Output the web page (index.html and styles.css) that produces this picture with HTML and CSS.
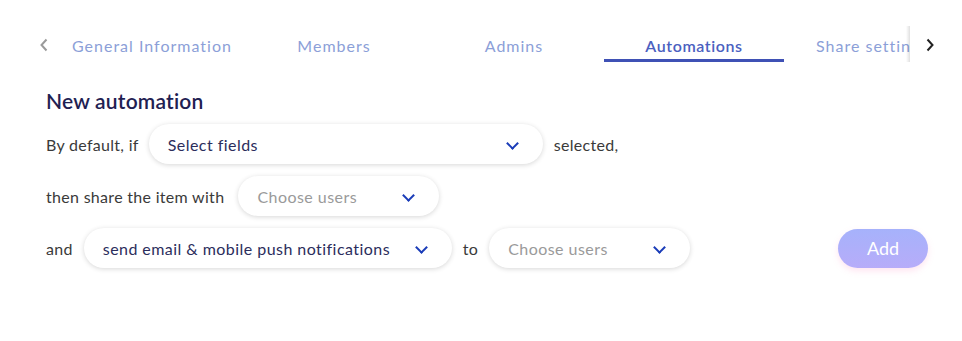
FILE: index.html
```html
<!DOCTYPE html>
<html lang="en">
<head>
    <meta charset="UTF-8">
    <title>Automations</title>
    <link rel="stylesheet" href="styles.css">
</head>
<body>

    <div class="tabbar">
        <button class="tab-arrow left">
            <svg width="10" height="14" viewBox="0 0 10 14"><path d="M7.5 1.5 L2.5 7 L7.5 12.5" fill="none" stroke="#9a9a9a" stroke-width="2"/></svg>
        </button>
        <div class="tabs">
            <div class="tab">General Information</div>
            <div class="tab">Members</div>
            <div class="tab">Admins</div>
            <div class="tab active">Automations</div>
            <div class="tab">Share settings</div>
            <div class="fade"></div>
        </div>
        <button class="tab-arrow right">
            <svg width="10" height="14" viewBox="0 0 10 14"><path d="M2.5 1.5 L7.5 7 L2.5 12.5" fill="none" stroke="#222" stroke-width="2"/></svg>
        </button>
    </div>

    <div class="content">
        <h2>New automation</h2>

        <div class="rule-row">
            <span>By default, if</span>
            <div class="select w-fields"><span class="value">Select fields</span><span class="chev"></span></div>
            <span>selected,</span>
        </div>

        <div class="rule-row">
            <span>then share the item with</span>
            <div class="select w-users share"><span class="placeholder">Choose users</span><span class="chev"></span></div>
        </div>

        <div class="rule-row">
            <span>and</span>
            <div class="select w-notify"><span class="value">send email &amp; mobile push notifications</span><span class="chev"></span></div>
            <span>to</span>
            <div class="select w-users"><span class="placeholder">Choose users</span><span class="chev"></span></div>
            <button class="add-btn">Add</button>
        </div>
    </div>

</body>
</html>
```

FILE: styles.css
```css
html, body {
    margin: 0;
    background: #fff;
    font-family: Lato, "Open Sans", sans-serif;
}

.tabbar {
    display: flex;
    align-items: center;
    padding: 26px 0 0 34px;
    height: 36px;
}

.tab-arrow {
    background: none;
    border: none;
    padding: 0;
    width: 20px;
    height: 20px;
    display: flex;
    align-items: center;
    justify-content: center;
    cursor: pointer;
    margin-top: 2px;
}

.tab-arrow.left {
    margin-right: 10px;
}

.tab-arrow.right {
    margin-left: 10px;
}

.tabs {
    display: flex;
    width: 846px;
    overflow: hidden;
    position: relative;
    height: 36px;
}

.tab {
    flex: 0 0 180px;
    text-align: center;
    font-size: 16px;
    letter-spacing: 1px;
    color: #8c9fd8;
    padding-top: 10px;
    box-sizing: border-box;
    border-bottom: 3px solid transparent;
    white-space: nowrap;
}

.tab:first-child {
    text-align: left;
    padding-left: 8px;
}

.tab:nth-child(5) {
    text-align: left;
    padding-left: 32px;
}

.tab.active {
    color: #4b5fc0;
    font-weight: 600;
    letter-spacing: 0.6px;
    border-bottom-color: #3f51b5;
}

.fade {
    position: absolute;
    right: 0;
    top: 0;
    width: 4px;
    height: 36px;
    background: linear-gradient(to right, rgba(0,0,0,0), rgba(0,0,0,0.12));
}

.content {
    padding: 0 34px 0 46px;
}

.content h2 {
    margin: 26px 0 11px;
    font-size: 21px;
    font-weight: 600;
    letter-spacing: 0.2px;
    color: #1f2152;
}

.rule-row {
    display: flex;
    align-items: center;
    gap: 11px;
    height: 40px;
    margin-bottom: 12px;
    font-size: 16px;
    letter-spacing: 0.3px;
    color: #3a3a3a;
}

.select {
    display: flex;
    align-items: center;
    justify-content: space-between;
    box-sizing: border-box;
    height: 40px;
    padding: 0 26px 0 19px;
    border-radius: 20px;
    background: #fff;
    box-shadow: 0 1px 5px rgba(0, 0, 0, 0.16);
    font-size: 16px;
    letter-spacing: 0.45px;
}

.w-fields { width: 394px; margin-left: -1px; }
.w-users { width: 201px; }
.w-users.share { margin-left: 3px; }
.w-notify { width: 368px; }

.value {
    color: #2b2d5c;
}

.placeholder {
    color: #9a9a9a;
}

.chev {
    width: 7px;
    height: 7px;
    border-right: 2px solid #1a3cb8;
    border-bottom: 2px solid #1a3cb8;
    transform: rotate(45deg);
    margin-top: -2px;
}

.add-btn {
    margin-left: auto;
    width: 90px;
    height: 39px;
    border: none;
    border-radius: 20px;
    background: linear-gradient(to bottom, #a6b2fb, #b7acf9);
    color: #fff;
    font-family: inherit;
    font-size: 18px;
    box-shadow: 0 3px 6px rgba(255, 150, 200, 0.25);
    cursor: pointer;
}
```
